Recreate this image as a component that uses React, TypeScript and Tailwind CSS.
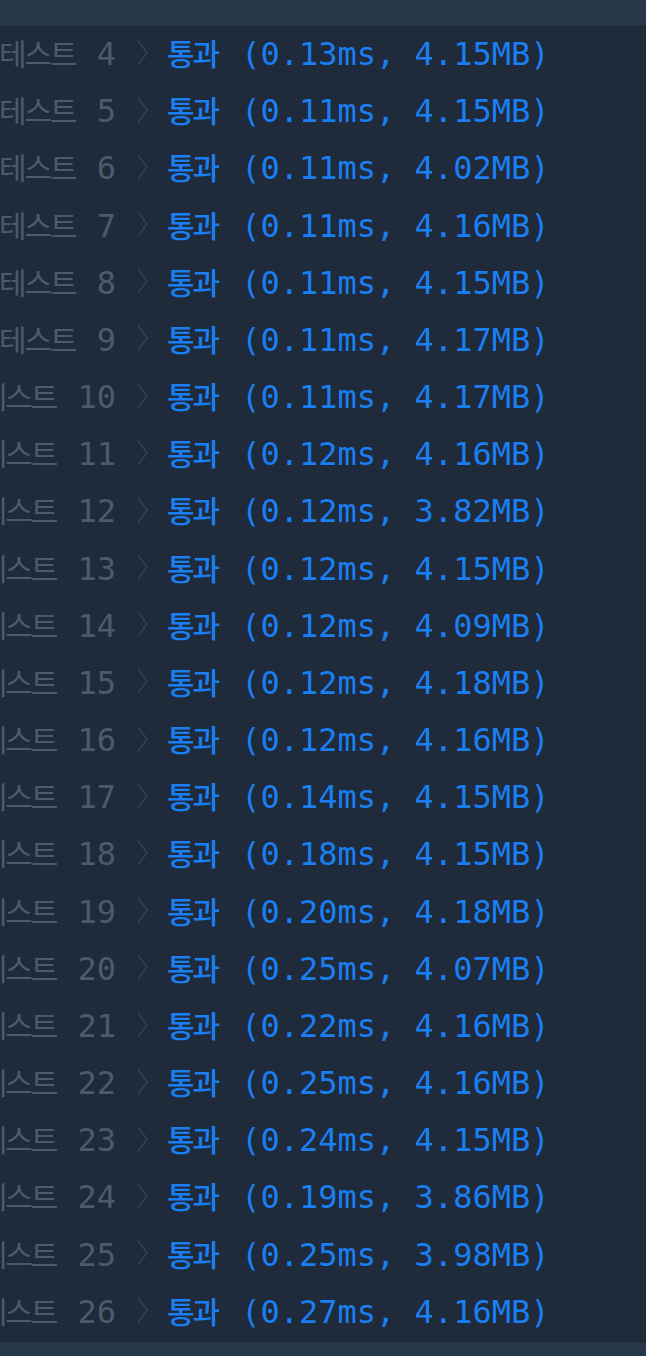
import React from 'react';

type Result = { no: number; ms: string; mb: string };

const results: Result[] = [
    { no: 4, ms: '0.13', mb: '4.15' },
    { no: 5, ms: '0.11', mb: '4.15' },
    { no: 6, ms: '0.11', mb: '4.02' },
    { no: 7, ms: '0.11', mb: '4.16' },
    { no: 8, ms: '0.11', mb: '4.15' },
    { no: 9, ms: '0.11', mb: '4.17' },
    { no: 10, ms: '0.11', mb: '4.17' },
    { no: 11, ms: '0.12', mb: '4.16' },
    { no: 12, ms: '0.12', mb: '3.82' },
    { no: 13, ms: '0.12', mb: '4.15' },
    { no: 14, ms: '0.12', mb: '4.09' },
    { no: 15, ms: '0.12', mb: '4.18' },
    { no: 16, ms: '0.12', mb: '4.16' },
    { no: 17, ms: '0.14', mb: '4.15' },
    { no: 18, ms: '0.18', mb: '4.15' },
    { no: 19, ms: '0.20', mb: '4.18' },
    { no: 20, ms: '0.25', mb: '4.07' },
    { no: 21, ms: '0.22', mb: '4.16' },
    { no: 22, ms: '0.25', mb: '4.16' },
    { no: 23, ms: '0.24', mb: '4.15' },
    { no: 24, ms: '0.19', mb: '3.86' },
    { no: 25, ms: '0.25', mb: '3.98' },
    { no: 26, ms: '0.27', mb: '4.16' },
];

const mono = "font-['DejaVu_Sans_Mono',monospace] text-[32px]";
const ko = "font-['Noto_Sans_CJK_KR',sans-serif] text-[30px] tracking-[-2px]";

const Chevron = () => (
    <svg width="11" height="26" viewBox="0 0 11 26" className="shrink-0 self-center ml-[21px]">
        <path d="M1 1 L10 13 L1 25" fill="none" stroke="#36414f" strokeWidth="1.5" />
    </svg>
);

const ResultRow: React.FC<{ result: Result }> = ({ result }) => (
    <div className="flex items-baseline whitespace-nowrap leading-[57.18px] h-[57.18px]">
        {/* right-aligned label, overflows off the left edge */}
        <div className="w-[116px] shrink-0 flex justify-end items-baseline text-[#4c5b6c]">
            <span className={ko}>테스트</span>
            <span className={`${mono} ml-[21px]`}>{result.no}</span>
        </div>
        <Chevron />
        <span className={`${ko} font-medium text-[#1a7ff2] ml-[19px]`}>통과</span>
        <span className={`${mono} text-[#1a7ff2] ml-[23px]`}>
            ({result.ms}ms, {result.mb}MB)
        </span>
    </div>
);

export default function App() {
    return (
        <div className="relative h-[1356px] w-[646px] overflow-hidden bg-[#1f2a3a]">
            <div className="-mt-[3px]">
                <div className="h-[27px]" />
                {results.map((r) => (
                    <ResultRow key={r.no} result={r} />
                ))}
            </div>
            {/* header / footer strips sit over the scrolled list */}
            <div className="absolute left-0 top-0 h-[27px] w-full bg-[#263747] border-b border-[#1a2330]" />
            <div className="absolute left-0 bottom-0 h-[15px] w-full bg-[#263747] border-t border-[#1a2330]" />
        </div>
    );
}
